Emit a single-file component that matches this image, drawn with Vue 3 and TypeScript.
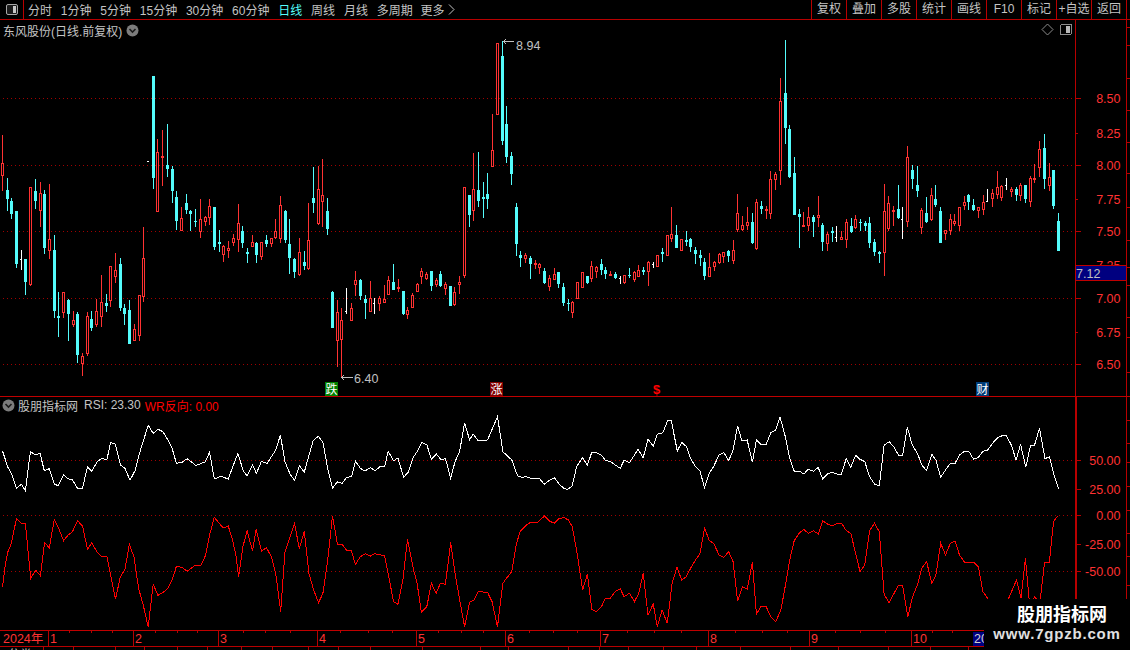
<script setup lang="ts">
type Kind = 'r' | 'c' | 'w'
type Row = [number, number, number, number, number, Kind]

// Candle rows are [x, high, bodyTop, bodyBottom, low, kind] measured on a 3x grid.
const segA: Row[] = [
  [7,15,100,137,183,'r'],[22,145,180,207,243,'c'],[34,205,213,252,267,'c'],[49,243,243,402,414,'c'],[64,360,388,388,420,'w'],
  [76,387,387,456,495,'c'],[91,172,172,466,468,'r'],[106,148,183,213,237,'c'],[121,156,190,243,291,'r'],[133,181,192,354,372,'c'],
  [148,163,328,362,387,'r'],[163,316,360,543,564,'c'],[175,487,558,564,621,'c'],[190,485,487,548,564,'r'],[205,507,510,552,633,'c'],
  [220,544,571,584,591,'r'],[232,546,552,675,699,'c'],[247,670,679,702,738,'r'],[262,546,558,672,678,'r'],[274,544,567,594,603,'c'],
  [289,507,543,585,591,'r'],[304,435,516,561,591,'r'],[319,492,519,528,546,'c'],[331,408,408,513,531,'r'],[346,370,420,441,459,'r'],
  [361,385,402,534,543,'c'],[373,522,534,552,585,'c'],[388,510,540,642,642,'c'],[403,582,598,633,633,'r'],[418,495,495,618,633,'r'],
  [430,291,384,501,516,'r'],[445,94,94,94,95,'w'],[460,-162,-162,144,177,'c'],[472,27,66,246,246,'r'],[487,0,78,84,168,'r'],
  [502,-18,105,117,141,'c'],[517,108,117,183,219,'c'],[529,183,201,273,300,'c'],[544,231,264,303,303,'r'],[559,192,219,240,252,'c'],
  [571,240,243,252,303,'c'],[586,237,273,276,291,'c'],[601,207,267,306,324,'r'],[616,258,261,276,288,'r'],[628,207,228,264,285,'r'],
  [643,231,231,351,360,'c'],[658,300,336,342,366,'c'],[670,345,348,375,396,'r'],[685,333,354,363,384,'r'],[700,312,324,339,348,'r'],
  [715,222,279,330,366,'r'],[727,288,303,339,354,'c'],[742,354,366,372,399,'c'],[757,315,336,351,351,'r'],[769,336,339,375,399,'c'],
  [784,336,336,381,390,'r'],[799,315,330,342,351,'c'],[814,324,324,342,351,'r'],[826,267,303,324,327,'r'],[841,198,225,327,339,'r'],
  [856,240,243,330,339,'c'],[868,267,342,384,432,'c'],[883,384,387,426,444,'c'],[898,324,366,435,438,'r'],[913,363,396,408,420,'c'],
  [925,219,330,417,420,'r'],[940,111,204,219,249,'c'],[955,108,177,282,285,'r'],[967,87,195,216,291,'r'],[982,204,243,297,315,'c'],
  [997,483,486,594,594,'c'],[1012,510,546,633,711,'r'],
]
const segB: Row[] = [
  [34,834,870,930,1041,'r'],[49,774,843,843,852,'w'],[64,819,834,873,873,'r'],[76,723,750,765,798,'r'],[91,747,750,798,810,'c'],
  [106,795,807,819,867,'c'],[121,753,804,846,846,'r'],[133,804,819,819,852,'w'],[148,798,804,822,843,'r'],[163,765,807,819,819,'r'],
  [175,738,750,795,795,'r'],[190,702,756,780,780,'c'],[205,747,771,777,786,'r'],[220,783,783,852,855,'c'],[232,831,840,855,867,'r'],
  [247,789,795,834,834,'r'],[262,759,762,786,786,'r'],[274,714,723,741,762,'r'],[289,726,732,747,750,'r'],[304,723,723,768,783,'c'],
  [319,744,750,765,771,'r'],[331,723,732,768,771,'c'],[346,756,762,777,795,'r'],[361,768,768,828,828,'c'],[373,771,786,825,828,'r'],
  [388,738,756,765,792,'r'],[403,471,471,738,744,'r'],[418,495,495,555,591,'c'],[430,369,477,543,573,'r'],[445,366,480,513,531,'c'],
  [460,456,501,507,564,'c'],[472,429,492,507,537,'c'],[487,252,360,411,411,'r'],[502,39,39,255,255,'r'],[517,33,78,333,345,'c'],
  [529,228,282,381,399,'c'],[544,366,378,432,465,'c'],[559,519,531,642,678,'c'],[571,663,675,684,711,'c'],[586,669,675,687,699,'r'],
  [601,678,684,702,747,'c'],[616,690,699,705,717,'r'],[628,699,702,714,732,'r'],[643,714,723,759,762,'c'],[658,735,744,771,783,'r'],
  [673,714,732,750,750,'r'],[685,726,726,762,774,'c'],[700,759,771,819,828,'c'],[715,807,819,822,843,'c'],[727,813,816,849,864,'r'],
  [742,756,756,807,807,'r'],[757,726,726,774,774,'r'],[772,738,738,759,762,'c'],[784,693,708,747,756,'r'],[799,708,711,726,744,'r'],
  [814,687,702,720,735,'c'],[826,711,720,732,747,'c'],[841,723,732,738,738,'r'],[856,726,732,744,747,'c'],[871,738,744,744,762,'w'],
  [883,735,735,759,762,'r'],[898,714,735,738,744,'c'],[913,723,726,750,756,'r'],[925,705,720,741,741,'r'],[940,711,720,726,735,'c'],
  [955,693,696,726,768,'r'],[970,696,702,702,714,'w'],[982,675,675,711,711,'r'],[997,654,666,672,696,'c'],[1012,615,615,678,678,'r'],
]
const segC: Row[] = [
  [4,531,612,627,636,'r'],[19,585,615,654,654,'c'],[34,627,627,663,663,'r'],[49,603,630,636,648,'c'],[61,624,627,651,666,'c'],
  [76,651,660,672,702,'c'],[91,660,675,684,708,'c'],[103,684,696,738,750,'c'],[118,669,711,741,741,'r'],[133,693,696,711,723,'r'],
  [148,669,672,699,702,'r'],[160,666,667,681,699,'r'],[175,660,663,678,696,'c'],[190,630,660,693,702,'r'],[202,492,549,600,606,'r'],
  [217,558,585,600,603,'r'],[232,531,576,588,600,'r'],[247,549,576,640,642,'c'],[259,507,516,657,660,'r'],[274,513,528,537,552,'c'],
  [289,528,537,543,567,'r'],[301,423,447,552,567,'r'],[316,426,432,450,480,'r'],[331,144,213,423,465,'r'],[346,30,189,294,342,'c'],
  [358,285,297,441,444,'c'],[373,381,429,555,555,'c'],[388,537,552,561,654,'c'],[400,546,585,591,591,'r'],[415,531,561,588,603,'r'],
  [430,555,561,576,621,'c'],[445,498,555,564,591,'r'],[457,579,585,636,663,'c'],[472,606,612,642,663,'r'],[487,591,603,609,636,'c'],
  [499,588,621,621,636,'w'],[514,603,621,630,630,'r'],[529,567,576,630,654,'r'],[544,564,588,606,609,'c'],[556,555,567,594,597,'r'],
  [571,567,576,579,603,'c'],[586,573,579,588,603,'c'],[598,561,579,639,654,'c'],[613,627,636,666,678,'c'],[628,663,666,672,699,'c'],
  [643,462,543,669,738,'r'],[655,498,519,597,603,'r'],[670,528,540,546,588,'r'],[685,465,537,564,567,'c'],[697,531,567,567,627,'w'],
  [712,348,381,576,591,'r'],[727,405,420,447,477,'c'],[742,408,465,483,501,'c'],[754,534,540,594,612,'r'],[769,501,549,576,579,'c'],
  [784,474,495,570,573,'r'],[796,465,507,525,531,'c'],[811,531,543,639,639,'c'],[826,600,600,612,630,'r'],[841,552,567,603,615,'r'],
  [853,552,573,582,588,'r'],[868,531,531,588,603,'r'],[883,498,516,528,540,'r'],[895,492,495,516,540,'c'],[910,507,525,540,543,'c'],
  [925,531,531,543,564,'r'],[940,495,516,540,555,'r'],[952,477,513,513,516,'w'],[967,477,489,507,531,'r'],[982,423,471,495,507,'r'],
  [994,465,468,504,513,'r'],[1009,444,465,465,480,'w'],[1024,471,477,486,501,'r'],[1039,471,477,495,513,'c'],[1051,459,465,498,513,'r'],
  [1066,465,465,507,519,'c'],[1081,438,444,516,531,'r'],[1093,402,444,450,459,'r'],[1108,333,357,414,441,'r'],[1123,312,354,447,477,'c'],
  [1138,399,441,468,483,'r'],[1150,420,420,528,537,'c'],[1165,549,573,663,663,'c'],
]

interface Candle { key: number; x: number; top: number; bottom: number; high: number; low: number; kind: Kind }
function toCandles(rows: Row[], ox: number, oy: number): Candle[] {
  return rows.map((r, i) => ({
    key: ox * 1000 + i,
    x: Math.floor(ox + r[0] / 3),
    high: Math.round(oy + r[1] / 3),
    top: Math.round(oy + r[2] / 3),
    bottom: Math.round(oy + r[3] / 3),
    low: Math.round(oy + r[4] / 3),
    kind: r[5],
  }))
}
const candles: Candle[] = [...toCandles(segA, 0, 130), ...toCandles(segB, 330, 30), ...toCandles(segC, 670, 30)]

const rsiLeft = [7,123,22,172,33,192,46,235,60,223,71,242,85,125,100,135,112,130,124,182,138,176,152,222,163,227,178,194,190,206,203,210,217,235,231,235,245,170,257,184,272,155,285,145,299,150,310,97,323,103,337,165,350,175,364,211,378,182,392,125,415,46,429,70,443,58,456,65,470,90,482,115,494,160,510,157,524,146,548,166,562,161,575,155,587,127,600,207,618,199,639,207,666,130,681,182,692,198,707,165,718,190,732,154,748,160,771,122,785,76,798,155,812,192,825,211,838,167,852,186,877,92,891,79,904,96,918,180,931,235,945,215,958,220,969,204,985,198,995,153,1009,175,1022,183,1037,173,1050,182,1064,170,1077,170,1087,124,1102,152,1114,144,1130,202,1143,187,1158,140,1168,125,1181,97,1195,104,1208,148,1222,132,1235,150,1247,145,1262,205,1274,155,1287,125,1301,38,1315,90,1325,72,1339,92,1365,90,1393,20,1408,125,1433,150,1449,197,1462,202,1474,200,1490,206,1510,205,1524,223,1540,210]
const rsiRight = [12,203,25,222,38,236,48,238,60,228,72,170,88,143,101,165,113,127,125,128,139,135,150,152,163,154,176,165,190,175,200,151,215,158,238,118,252,143,265,88,279,108,290,73,305,68,318,32,328,32,344,123,356,97,369,110,380,145,393,170,405,182,418,233,430,190,442,170,457,135,470,128,483,152,495,120,507,48,519,93,533,90,547,157,558,90,570,103,584,103,597,68,610,60,622,22,635,75,648,145,660,183,675,184,686,192,698,178,712,184,725,172,737,207,750,192,763,187,776,192,788,192,801,145,813,172,826,136,838,148,851,155,864,200,877,222,890,227,903,105,917,95,930,112,942,135,953,135,966,52,979,105,993,130,1005,165,1018,182,1032,133,1043,150,1056,202,1069,180,1082,160,1095,160,1107,135,1120,124,1132,124,1145,148,1158,142,1170,124,1183,120,1196,100,1210,83,1222,77,1233,76,1247,105,1260,150,1272,103,1286,172,1299,105,1310,105,1323,55,1338,146,1350,140,1362,195,1375,238]
const wrLeft = [7,530,15,462,22,425,32,400,46,326,60,340,71,341,86,505,100,481,113,497,125,398,138,413,152,328,165,357,178,392,190,376,203,365,217,332,231,348,245,418,257,398,271,425,285,440,299,438,323,568,337,500,350,478,362,403,375,440,388,535,401,585,415,650,429,523,442,556,456,548,470,535,482,510,494,469,510,472,524,484,548,465,562,468,575,437,587,375,600,322,625,354,639,348,650,385,660,432,668,500,680,410,692,362,707,423,717,358,732,423,746,413,760,440,772,490,786,605,798,425,812,380,825,340,838,417,852,364,865,490,878,540,892,578,904,550,917,455,931,318,945,403,958,403,970,420,984,422,995,463,1009,440,1023,431,1037,438,1048,431,1077,437,1102,575,1114,583,1128,510,1141,388,1158,480,1168,520,1180,607,1195,590,1208,520,1221,550,1233,520,1247,523,1262,397,1274,490,1287,568,1301,650,1315,577,1327,570,1339,545,1365,547,1378,575,1393,650,1408,520,1418,505,1433,485,1445,405,1456,365,1474,345,1484,338,1505,337,1525,318,1538,333]
const wrRight = [12,340,25,325,38,323,50,330,60,350,72,420,88,540,101,493,113,598,125,605,139,590,150,565,163,565,176,545,190,536,200,560,215,550,228,575,240,550,252,490,265,615,279,582,290,650,303,600,317,640,330,520,343,472,356,510,368,500,380,475,393,450,405,433,418,355,430,390,443,402,457,435,470,442,483,425,495,455,507,572,520,530,533,537,547,457,558,612,570,590,584,590,597,620,610,635,624,600,634,540,648,450,660,392,673,370,686,358,698,370,712,362,725,372,737,332,750,342,763,347,776,340,788,340,801,362,813,370,826,430,838,485,851,465,864,362,877,340,890,365,903,552,916,578,930,550,942,525,953,525,967,620,980,560,993,525,1005,475,1018,455,1032,520,1043,495,1056,400,1069,435,1082,400,1095,393,1107,435,1120,456,1145,456,1158,470,1170,545,1183,565,1196,620,1240,565,1261,510,1273,565,1285,445,1297,590,1310,560,1324,580,1337,457,1350,457,1361,335,1372,318]

function toPoints(flat: number[], ox: number, sx: number): string {
  const out: string[] = []
  for (let i = 0; i < flat.length; i += 2) {
    out.push(`${(ox + flat[i] / sx).toFixed(1)},${(410 + flat[i + 1] / 3).toFixed(1)}`)
  }
  return out.join(' ')
}
const rsiLine = toPoints(rsiLeft, 0, 2.8) + ' ' + toPoints(rsiRight, 550, 2.703)
const wrLine = toPoints(wrLeft, 0, 2.8) + ' ' + toPoints(wrRight, 550, 2.703)

const periods = ['分时', '1分钟', '5分钟', '15分钟', '30分钟', '60分钟', '日线', '周线', '月线', '多周期']
const actions = ['复权', '叠加', '多股', '统计', '画线', 'F10', '标记', '+自选', '返回']

const priceGrid = [98, 165, 231, 298, 364]
const priceLabels: [number, string][] = [[98,'8.50'],[133,'8.25'],[165,'8.00'],[199,'7.75'],[231,'7.50'],[265,'7.25'],[298,'7.00'],[332,'6.75'],[364,'6.50']]
const sideTicks = [27, 45, 78, 110, 142, 173, 207, 240, 267, 285, 317, 337, 372]
const subGrid = [460, 515, 571]
const subLabels: [number, string][] = [[460,'50.00'],[489,'25.00'],[515,'0.00'],[544,'-25.00'],[571,'-50.00']]
const subSideTicks = [420, 443, 462, 486, 510, 533, 556, 585]

const months: [number, string][] = [[48,'1'],[133,'2'],[218,'3'],[317,'4'],[416,'5'],[505,'6'],[600,'7'],[708,'8'],[809,'9'],[911,'10']]
const axisTicks = [69,91,112,155,177,197,243,265,290,340,368,392,438,461,483,529,553,577,627,654,681,735,762,787,835,860,885,932,952]
const tabStops = [43,73,115,144,177,207,241,272,308,338,370,422,480,508,568,599,628,663,696,740,790,838,888,930,968]
</script>

<template>
  <div class="terminal">
    <header class="toolbar">
      <button class="layout-btn" type="button">
        <svg width="12" height="11" viewBox="0 0 12 11">
          <rect x="0.5" y="0.5" width="11" height="10" rx="1.5" fill="#1c1c1c" stroke="#a8a8a8" />
          <rect x="7" y="2" width="3" height="7" fill="#c8c8c8" />
        </svg>
      </button>
      <nav class="periods">
        <span v-for="p in periods" :key="p" class="period" :class="{ active: p === '日线' }">{{ p }}</span>
        <span class="period more">
          更多
          <svg width="7" height="11" viewBox="0 0 7 11">
            <path d="M1 0.5l5 5-5 5" fill="none" stroke="#c4c4c4" />
          </svg>
        </span>
      </nav>
      <nav class="actions">
        <span v-for="a in actions" :key="a" class="action">{{ a }}</span>
      </nav>
    </header>

    <section class="panel price-panel">
      <svg class="plot" width="1130" height="376" viewBox="0 20 1130 376">
        <line v-for="y in priceGrid" :key="y" class="dots" x1="3" :y1="y + 0.5" x2="1075" :y2="y + 0.5" />
        <line class="axis" x1="1075.5" y1="20" x2="1075.5" y2="396" />
        <line class="axis" x1="1126.5" y1="20" x2="1126.5" y2="396" />
        <line v-for="y in sideTicks" :key="'s' + y" class="axis" x1="1126" :y1="y + 0.5" x2="1130" :y2="y + 0.5" />
        <template v-for="(l, i) in priceLabels" :key="l[1]">
          <line class="axis" x1="1075" :y1="l[0] + 0.5" :x2="i % 2 ? 1078 : 1081" :y2="l[0] + 0.5" />
          <text class="scale" x="1120.5" :y="l[0] + 5">{{ l[1] }}</text>
        </template>

        <g v-for="c in candles" :key="c.key">
          <template v-if="c.kind === 'w'">
            <rect class="fill-w" :x="c.x" :y="c.high" width="1" :height="Math.max(c.low - c.high, 1)" />
            <rect class="fill-w" :x="c.x - 1" :y="c.top" width="1" height="1" />
          </template>
          <template v-else>
            <rect :class="c.kind === 'r' ? 'fill-r' : 'fill-c'" :x="c.x" :y="c.high" width="1" :height="c.low - c.high" />
            <rect v-if="c.kind === 'c'" class="fill-c" :x="c.x - 1" :y="c.top" width="3" :height="Math.max(c.bottom - c.top, 1)" />
            <rect v-else class="body-r" :x="c.x - 0.5" :y="c.top + 0.5" width="2" :height="Math.max(c.bottom - c.top - 1, 1)" />
          </template>
        </g>

        <path class="mark" d="M503 41.5H514M503 41.5l3 -2M503 41.5l3 2M341 377.5H353M341 377.5l3 -2M341 377.5l3 2" />
        <text class="mark-text" x="516" y="50">8.94</text>
        <text class="mark-text" x="354" y="383">6.40</text>

        <rect class="sig-down" x="325" y="382" width="13" height="14" />
        <text class="sig-text" x="331.5" y="394">跌</text>
        <rect class="sig-up" x="490" y="382" width="13" height="14" />
        <text class="sig-text" x="496.5" y="394">涨</text>
        <text class="sig-dollar" x="656.5" y="394">$</text>
        <rect class="sig-fin" x="976" y="382" width="13" height="14" />
        <text class="sig-text" x="982.5" y="394">财</text>

        <rect class="tag" x="1075.5" y="265.5" width="51" height="15" />
        <text class="tag-text" x="1076" y="278">7.12</text>

        <path class="outline diamond" d="M1047.5 24l5.5 5.5-5.5 5.5-5.5-5.5z" />
        <rect class="outline" x="1060.5" y="24.5" width="11" height="10" rx="1.5" />
        <rect x="1066" y="26" width="4" height="7" fill="#b8b8b8" />
      </svg>
      <div class="title">
        <span>东风股份(日线.前复权)</span>
        <svg class="chev" width="13" height="13" viewBox="0 0 13 13">
          <circle cx="6.5" cy="6.5" r="6" fill="#7c7c7c" />
          <path d="M3.5 5l3 3 3-3" fill="none" stroke="#1a1a1a" stroke-width="1.6" />
        </svg>
      </div>
    </section>

    <section class="panel sub-panel">
      <svg class="plot" width="1130" height="233" viewBox="0 397 1130 233">
        <line v-for="y in subGrid" :key="y" class="dots" x1="3" :y1="y + 0.5" x2="1075" :y2="y + 0.5" />
        <line class="axis" x1="1075.5" y1="397" x2="1075.5" y2="630" stroke-width="2" />
        <line class="axis" x1="1126.5" y1="397" x2="1126.5" y2="630" />
        <line v-for="y in subSideTicks" :key="'t' + y" class="axis" x1="1126" :y1="y + 0.5" x2="1130" :y2="y + 0.5" />
        <template v-for="l in subLabels" :key="l[1]">
          <line class="axis" x1="1075" :y1="l[0] + 0.5" x2="1081" :y2="l[0] + 0.5" />
          <text class="scale" x="1120.5" :y="l[0] + 5">{{ l[1] }}</text>
        </template>
        <polyline class="line-rsi" :points="rsiLine" />
        <polyline class="line-wr" :points="wrLine" />
      </svg>
      <div class="title sub-title">
        <svg class="chev" width="13" height="13" viewBox="0 0 13 13">
          <circle cx="6.5" cy="6.5" r="6" fill="#7c7c7c" />
          <path d="M3.5 5l3 3 3-3" fill="none" stroke="#1a1a1a" stroke-width="1.6" />
        </svg>
        <span class="sub-name">股朋指标网</span>
        <span class="sub-rsi">RSI: 23.30</span>
        <span class="sub-wr">WR反向: 0.00</span>
      </div>
    </section>

    <footer class="timeline">
      <svg class="plot" width="1130" height="19" viewBox="0 631 1130 19">
        <line class="axis" x1="0" y1="646.5" x2="1130" y2="646.5" />
        <line class="axis" x1="1075.5" y1="631" x2="1075.5" y2="646" />
        <line class="axis" x1="1126.5" y1="631" x2="1126.5" y2="646" />
        <text class="year" x="3" y="643">2024年</text>
        <template v-for="m in months" :key="m[1]">
          <line class="axis" :x1="m[0] + 0.5" y1="631" :x2="m[0] + 0.5" y2="646" />
          <text class="month" :x="m[0] + 2" y="643">{{ m[1] }}</text>
        </template>
        <line v-for="x in axisTicks" :key="'a' + x" class="axis" :x1="x + 0.5" y1="631" :x2="x + 0.5" y2="633" />
        <line v-for="x in tabStops" :key="'b' + x" class="axis" :x1="x + 0.5" y1="647" :x2="x + 0.5" y2="650" />
        <rect x="973" y="632" width="12" height="14" fill="#000080" />
        <text class="month-active" x="974" y="643">20</text>
        <text class="tab-text" x="8" y="659">分类</text>
      </svg>
    </footer>

    <aside class="watermark">
      <div class="wm-name">股朋指标网</div>
      <div class="wm-url">www.7gpzb.com</div>
    </aside>
  </div>
</template>

<style scoped>
.terminal {
  position: relative;
  width: 1130px;
  height: 650px;
  overflow: hidden;
  background: #000;
  font: 12px "Liberation Sans", "Noto Sans CJK SC", sans-serif;
  color: #c4c4c4;
}
.toolbar {
  display: flex;
  align-items: center;
  height: 19px;
  border-bottom: 1px solid #b80000;
}
.layout-btn {
  display: flex;
  align-items: center;
  justify-content: center;
  width: 24px;
  height: 19px;
  padding: 0;
  background: none;
  border: 0;
  border-right: 1px solid #b80000;
}
.periods {
  display: flex;
  gap: 8.8px;
  padding-left: 4px;
}
.period.active {
  color: #54fcfc;
}
.more {
  display: flex;
  align-items: center;
  gap: 3px;
  margin-left: -1px;
}
.actions {
  display: flex;
  margin-left: auto;
  padding-right: 3px;
}
.action {
  box-sizing: border-box;
  width: 35px;
  height: 19px;
  line-height: 19px;
  text-align: center;
  border-left: 1px solid #b80000;
}
.action:last-child {
  width: 36px;
  border-right: 1px solid #b80000;
}
.panel {
  position: relative;
}
.price-panel {
  height: 376px;
  border-bottom: 1px solid #c00000;
}
.sub-panel {
  height: 233px;
  border-bottom: 1px solid #c00000;
}
.plot {
  display: block;
  shape-rendering: crispEdges;
}
.title {
  position: absolute;
  top: 2px;
  left: 3px;
  display: flex;
  align-items: center;
  gap: 4px;
  height: 16px;
}
.sub-title {
  top: 0;
  left: 2px;
  gap: 0;
}
.sub-name {
  margin-left: 3px;
}
.sub-rsi {
  margin-left: 6px;
}
.sub-wr {
  margin-left: 4px;
  color: #ff0000;
}
.dots {
  stroke: #a00000;
  stroke-dasharray: 1 3;
}
.axis {
  stroke: #b80000;
}
.scale {
  fill: #ff3232;
  font: 12.5px "Liberation Sans", sans-serif;
  text-anchor: end;
}
.fill-r {
  fill: #ff3232;
}
.fill-c {
  fill: #54fcfc;
}
.fill-w {
  fill: #ffffff;
}
.body-r {
  fill: #000;
  stroke: #ff3232;
}
.line-rsi,
.line-wr {
  fill: none;
  stroke-width: 1;
}
.line-rsi {
  stroke: #ffffff;
}
.line-wr {
  stroke: #ff0000;
}
.mark {
  fill: none;
  stroke: #c0c0c0;
}
.mark-text {
  fill: #c0c0c0;
  font: 12.5px "Liberation Sans", sans-serif;
}
.sig-down {
  fill: #008000;
}
.sig-up {
  fill: #800000;
}
.sig-fin {
  fill: #003c78;
}
.sig-text {
  fill: #fff;
  font: 12px "Noto Sans CJK SC", sans-serif;
  text-anchor: middle;
}
.sig-dollar {
  fill: #ff0000;
  font: bold 13px "Liberation Sans", sans-serif;
  text-anchor: middle;
}
.tag {
  fill: #000080;
  stroke: #c00000;
}
.tag-text {
  fill: #c0c0c0;
  font: 12.5px "Liberation Sans", sans-serif;
}
.outline {
  fill: none;
  stroke: #8c8c8c;
}
.diamond {
  shape-rendering: geometricPrecision;
}
.year,
.month {
  fill: #ff3232;
  font: 12.5px "Liberation Sans", "Noto Sans CJK SC", sans-serif;
}
.month-active {
  fill: #d0d0d0;
  font: 12.5px "Liberation Sans", sans-serif;
}
.tab-text {
  fill: #c8c8c8;
  font: 12px "Noto Sans CJK SC", sans-serif;
}
.watermark {
  position: absolute;
  right: 0;
  bottom: 0;
  box-sizing: border-box;
  width: 146px;
  height: 51px;
  padding-top: 3px;
  background: #000;
  color: #fff;
  text-align: center;
}
.wm-name {
  padding-left: 10px;
  font: bold 18px/22px "Noto Sans CJK SC", sans-serif;
}
.wm-url {
  margin-top: 1px;
  font: bold 15px/18px "Liberation Sans", sans-serif;
  color: #e0e0e0;
  letter-spacing: 0.8px;
}
</style>
